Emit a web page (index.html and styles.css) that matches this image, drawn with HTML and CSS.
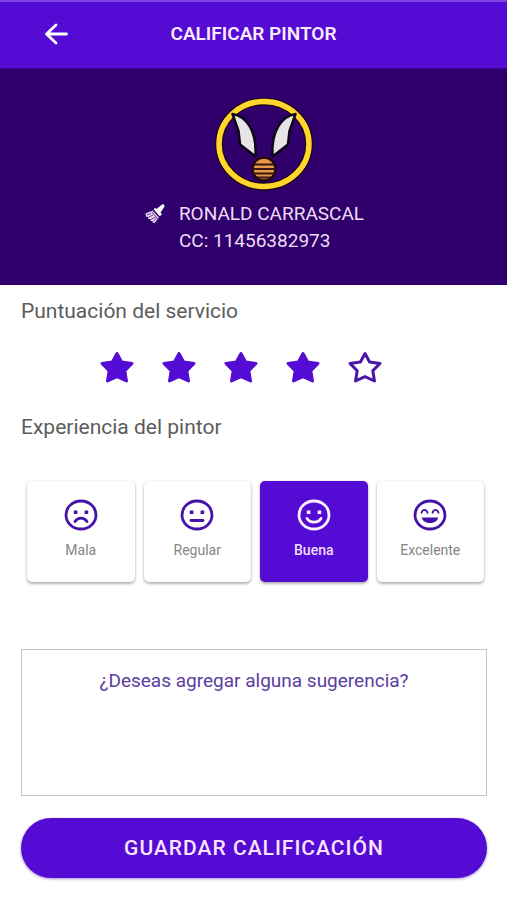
FILE: index.html
```html
<!DOCTYPE html>
<html lang="es">
<head>
<meta charset="utf-8">
<meta name="viewport" content="width=device-width, initial-scale=1">
<title>Calificar pintor</title>
<link rel="stylesheet" href="styles.css">
</head>
<body>
<header class="bar">
  <button class="back" type="button" aria-label="Volver">
    <svg viewBox="0 0 24 22" width="24" height="22"><path d="M12 2 2.500 11 12 20M3 11h19.500" fill="none" stroke="currentColor" stroke-width="2.800" stroke-linecap="round" stroke-linejoin="round"/></svg>
  </button>
  <h1 class="title">CALIFICAR PINTOR</h1>
</header>
<section class="profile">
  <svg class="avatar" viewBox="0 0 98 93" width="98" height="93" aria-hidden="true">
    <ellipse cx="49" cy="46" rx="45" ry="42.500" fill="none" stroke="#1d0618" stroke-width="8"/>
    <ellipse cx="49" cy="46" rx="45" ry="42.500" fill="none" stroke="#ffd52e" stroke-width="5.500"/>
    <g fill="#e6e4e6" stroke="#100515" stroke-width="2.500" stroke-linejoin="round">
      <path d="M17.500 16C31 18 42 32 40.500 58.500L25 46.500 23.500 33Z"/>
      <path d="M80.500 16C67 18 56 32 57.500 58.500L73 46.500 74.500 33Z"/>
    </g>
    <circle cx="49" cy="71" r="11.500" fill="#e89a43" stroke="#230711" stroke-width="2.500"/>
    <path d="M39 66.500h20M38 71h22M38.500 75.500h21M42 79.500h14" stroke="#391314" stroke-width="1.800"/>
  </svg>
  <div class="person">
    <svg class="brush" viewBox="0 0 24 24" width="24" height="24" aria-hidden="true">
      <path d="m13.500 7 5.200-4.300c1.500-1.100 3.600.8 2.600 2.300L17.500 10.500l1.500 2-2.300 1.700-6-6.700 1.500-1.800z" fill="#fff"/>
      <path d="m9.500 8.500 6.400 7-4.400 5.500-2-.4.300-1.500-2.500-.1.400-1.900-2.700-.2.700-2-3-.3.500-2.100L1.500 12z" fill="#f0dcf6"/>
      <path d="m4 13 4-1.500M6 15l4-2M8 17.500l4-2.500M10.500 19l3-3M8.500 9.500l6 7" stroke="#2e006c" stroke-width=".8"/>
    </svg>
    <div>
      <p class="line">RONALD CARRASCAL</p>
      <p class="line">CC: 11456382973</p>
    </div>
  </div>
</section>
<svg width="0" height="0" class="sprite" aria-hidden="true">
  <symbol id="star" viewBox="0 0 36 34"><path d="M18 3.500 22.600 12 33 13.400 25.800 20.800 27.500 31 18 26.700 8.500 31 10.200 20.800 3 13.400 13.400 12Z" stroke="currentColor" stroke-width="3" stroke-linejoin="round"/></symbol>
</svg>
<form class="content">
  <fieldset class="group">
    <legend class="heading">Puntuación del servicio</legend>
    <div class="stars">
      <label class="star"><input type="radio" name="puntos" value="1" aria-label="1 estrella"><svg><use href="#star"/></svg></label>
      <label class="star"><input type="radio" name="puntos" value="2" aria-label="2 estrellas"><svg><use href="#star"/></svg></label>
      <label class="star"><input type="radio" name="puntos" value="3" aria-label="3 estrellas"><svg><use href="#star"/></svg></label>
      <label class="star"><input type="radio" name="puntos" value="4" aria-label="4 estrellas" checked><svg><use href="#star"/></svg></label>
      <label class="star empty"><input type="radio" name="puntos" value="5" aria-label="5 estrellas"><svg><use href="#star"/></svg></label>
    </div>
  </fieldset>
  <fieldset class="group">
    <legend class="heading">Experiencia del pintor</legend>
    <div class="cards">
      <label class="card"><input type="radio" name="experiencia" value="mala">
        <svg class="face" viewBox="0 0 34 32"><ellipse cx="17" cy="16" rx="15" ry="14"/><path d="M11 22.500c3-4.500 9-4.500 12 0"/><path class="solid" d="M9.800 11.500h3.600v3.400H9.800zM20.600 11.500h3.600v3.400h-3.600z"/></svg>
        <span>Mala</span></label>
      <label class="card"><input type="radio" name="experiencia" value="regular">
        <svg class="face" viewBox="0 0 34 32"><ellipse cx="17" cy="16" rx="15" ry="14"/><path d="M11 21.500h12"/><path class="solid" d="M9.800 11.500h3.600v3.400H9.800zM20.600 11.500h3.600v3.400h-3.600z"/></svg>
        <span>Regular</span></label>
      <label class="card"><input type="radio" name="experiencia" value="buena" checked>
        <svg class="face" viewBox="0 0 34 32"><ellipse cx="17" cy="16" rx="15" ry="14"/><path d="M10 19.500c3 4.700 11 4.700 14 0"/><path class="solid" d="M9.800 11.500h3.600v3.400H9.800zM20.600 11.500h3.600v3.400h-3.600z"/></svg>
        <span>Buena</span></label>
      <label class="card"><input type="radio" name="experiencia" value="excelente">
        <svg class="face" viewBox="0 0 34 32"><ellipse cx="17" cy="16" rx="15" ry="14"/><path class="thin" d="M8.500 13.800c1-3.800 5-3.800 6 0M19.500 13.800c1-3.800 5-3.800 6 0"/><path class="solid" d="M8.800 18.500h16.400c-1.400 7.400-15 7.400-16.400 0z"/></svg>
        <span>Excelente</span></label>
    </div>
  </fieldset>
  <textarea class="note" aria-label="Sugerencia" placeholder="¿Deseas agregar alguna sugerencia?"></textarea>
  <button class="save" type="submit">GUARDAR CALIFICACIÓN</button>
</form>
</body>
</html>
```
FILE: styles.css
```css
* { box-sizing: border-box; }

body {
  margin: 0;
  background: #fff;
  font-family: Roboto, "Liberation Sans", sans-serif;
  color: #5c5c5c;
}

button { border: 0; padding: 0; font: inherit; cursor: pointer; }

.bar {
  display: grid;
  grid-template-columns: 44px 1fr 44px;
  align-items: center;
  height: 68px;
  padding: 0 44px 2px;
  background: #540bd3;
  border-top: 2px solid #7c42dc;
  color: #fbe9ff;
}
.back { display: flex; background: none; color: #fff; }
.title { margin: 0; font-size: 19px; font-weight: 600; line-height: 24px; text-align: center; }

.profile {
  padding: 29px 0 31px;
  background: #2f006b;
  border-top: 1px solid #3d028f;
  color: #f0dcf6;
}
.avatar { display: block; margin: 0 auto; transform: translateX(10px); }
.person { display: flex; justify-content: center; gap: 12px; margin-top: 9px; }
.brush { margin-top: 2px; }
.line { margin: 0; font-size: 19px; line-height: 27px; }

.sprite { display: block; }

.content { padding: 14px 20px 20px 21px; }
.group { margin: 0; padding: 0; border: 0; min-width: 0; }
.heading { padding: 0; font-size: 21px; line-height: 24px; }

.group input { position: absolute; inset: 0; margin: 0; appearance: none; cursor: pointer; }

.stars {
  display: flex;
  justify-content: center;
  gap: 26px;
  padding: 27px 26px 31px 0;
}
.star { position: relative; display: block; color: #540bd3; }
.star svg { display: block; width: 36px; height: 34px; fill: currentColor; }
.star.empty svg { fill: none; color: #4b16a8; }

.cards {
  display: grid;
  grid-template-columns: repeat(4, 1fr);
  gap: 9px;
  padding: 42px 3px 0 6px;
}
.card {
  position: relative;
  display: flex;
  flex-direction: column;
  align-items: center;
  gap: 10px;
  height: 101px;
  padding-top: 18px;
  border-radius: 5px;
  background: #fff;
  box-shadow: 0 2px 3px rgba(0, 0, 0, .28), 0 0 3px rgba(0, 0, 0, .1);
  color: #858585;
  font-size: 14px;
  line-height: 18px;
}
.card:has(:checked) { background: #540bd3; color: #f3dfff; font-weight: 500; }

.face { width: 34px; height: 32px; fill: none; stroke: #4513a8; stroke-width: 2.8; stroke-linecap: round; }
.face .solid { fill: #4513a8; stroke: none; }
.face .thin { stroke-width: 1.8; }
.card:has(:checked) .face { stroke: #fff0ff; }
.card:has(:checked) .solid { fill: #fff0ff; }

.note {
  display: block;
  width: 100%;
  height: 147px;
  margin: 67px 0 22px;
  padding: 19px 16px;
  border: 1px solid #c4c4c4;
  border-radius: 0;
  outline: 0;
  resize: none;
  background: #fff;
  font: 19px/24px Roboto, "Liberation Sans", sans-serif;
  text-align: center;
  color: #5b3da0;
}
.note::placeholder { color: #5b3da0; opacity: 1; }

.save {
  display: block;
  width: 100%;
  height: 60px;
  border-radius: 30px;
  background: #540bd3;
  box-shadow: 0 1px 3px rgba(60, 0, 150, .45);
  color: #fbe4ff;
  font-size: 21px;
  font-weight: 500;
  letter-spacing: 1px;
}
```
